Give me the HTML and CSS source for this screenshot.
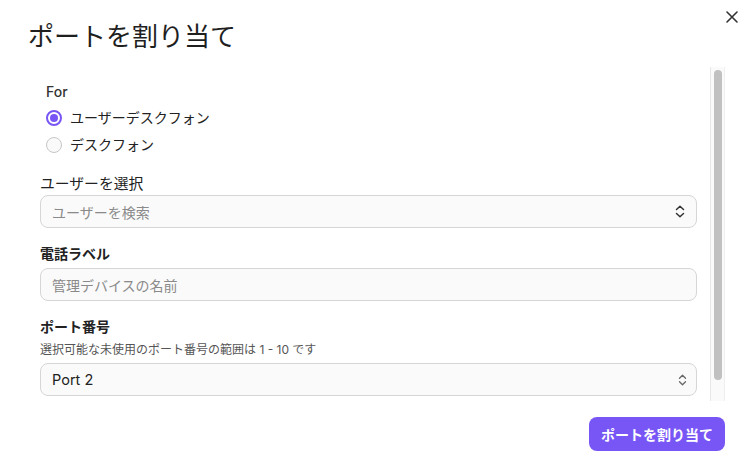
FILE: index.html
```html
<!DOCTYPE html>
<html lang="ja">
<head>
<meta charset="utf-8">
<title>ポートを割り当て</title>
<link rel="stylesheet" href="styles.css">
</head>
<body>
<div class="modal">
  <button class="close" aria-label="閉じる">
    <svg width="12" height="12" viewBox="0 0 12 12"><path d="M1 1L11 11M11 1L1 11" stroke="#333" stroke-width="1.6" stroke-linecap="round"/></svg>
  </button>
  <h1 class="title">ポートを割り当て</h1>
  <div class="scroll">
    <div class="content">
      <div class="for-group">
        <div class="for-label">For</div>
        <label class="radio-row"><span class="radio checked"></span>ユーザーデスクフォン</label>
        <label class="radio-row second"><span class="radio"></span>デスクフォン</label>
      </div>

      <div class="field first">
        <div class="label large">ユーザーを選択</div>
        <div class="select">
          <span class="placeholder">ユーザーを検索</span>
          <svg class="chev" width="10" height="13" viewBox="0 0 10 13"><path d="M1.5 4.5L5 1.2L8.5 4.5M1.5 8.5L5 11.8L8.5 8.5" fill="none" stroke="#333" stroke-width="1.5" stroke-linecap="round" stroke-linejoin="round"/></svg>
        </div>
      </div>

      <div class="field">
        <div class="label bold">電話ラベル</div>
        <div class="input"><span class="placeholder">管理デバイスの名前</span></div>
      </div>

      <div class="field">
        <div class="label bold">ポート番号</div>
        <div class="help">選択可能な未使用のポート番号の範囲は 1 - 10 です</div>
        <div class="select native">
          <span class="value">Port 2</span>
          <svg class="chev" width="9" height="12" viewBox="0 0 9 12"><path d="M1.5 4.2L4.5 1.3L7.5 4.2M1.5 7.8L4.5 10.7L7.5 7.8" fill="none" stroke="#666" stroke-width="1.3" stroke-linecap="round" stroke-linejoin="round"/></svg>
        </div>
      </div>
    </div>
    <div class="scrollbar" aria-hidden="true"><div class="thumb"></div></div>
  </div>
  <div class="footer">
    <button class="primary">ポートを割り当て</button>
  </div>
</div>
</body>
</html>
```

FILE: styles.css
```css
* { box-sizing: border-box; }

html, body {
  margin: 0;
  padding: 0;
  background: #ffffff;
}

body {
  font-family: "Inter", "Noto Sans CJK JP", sans-serif;
  color: #222222;
  width: 755px;
  height: 475px;
  overflow: hidden;
}

.modal {
  position: relative;
  padding: 21px 30px 0 28px;
}

.close {
  position: absolute;
  top: 11px;
  left: 726px;
  width: 12px;
  height: 12px;
  padding: 0;
  border: 0;
  background: none;
  display: flex;
}

.title {
  margin: 0;
  font-size: 26px;
  line-height: 32px;
  font-weight: 400;
  color: #1f1f1f;
}

.scroll {
  margin-top: 14px;
  height: 334px;
  display: flex;
}

.content {
  flex: 1;
  min-width: 0;
  overflow: hidden;
  padding: 15px 13px 0 12px;
}

.scrollbar {
  width: 15px;
  flex: none;
  background: #fafafa;
  border-left: 1px solid #e8e8e8;
  border-right: 1px solid #efefef;
  padding: 3px 2px 21px 3px;
}

.thumb {
  height: 100%;
  background: #c1c1c1;
  border-radius: 4px;
}

.for-group {
  padding-left: 6px;
  display: flex;
  flex-direction: column;
}

.for-label {
  font-size: 14px;
  line-height: 20px;
  font-weight: 500;
  color: #333333;
}

.radio-row {
  display: flex;
  align-items: center;
  gap: 8px;
  margin-top: 6px;
  font-size: 14px;
  line-height: 20px;
  color: #222222;
}

.radio-row.second {
  margin-top: 7px;
}

.radio {
  width: 16px;
  height: 16px;
  border-radius: 50%;
  border: 1px solid #c6c6c6;
  background: #fafafa;
  flex: none;
}

.radio.checked {
  border: 2px solid #7856f5;
  background: #ffffff;
  display: flex;
  align-items: center;
  justify-content: center;
}

.radio.checked::after {
  content: "";
  width: 8px;
  height: 8px;
  border-radius: 50%;
  background: #7856f5;
}

.field {
  margin-top: 16px;
  display: flex;
  flex-direction: column;
}

.field.first {
  margin-top: 19px;
}

.label {
  font-size: 14px;
  line-height: 20px;
  color: #222222;
  margin-bottom: 4px;
}

.label.large {
  font-size: 14.8px;
}

.field.first .label {
  margin-bottom: 1px;
}

.label.bold {
  font-weight: 700;
}

.help {
  font-size: 12px;
  line-height: 17px;
  color: #555555;
  margin-top: 0;
  margin-bottom: 5px;
}

.select,
.input {
  height: 33px;
  border: 1px solid #d6d6d6;
  border-radius: 8px;
  background: #fafafa;
  display: flex;
  align-items: center;
  justify-content: space-between;
  padding: 0 11px;
  font-size: 14px;
}

.select.native {
  padding-right: 9px;
}

.placeholder {
  color: #8a8a8a;
}

.value {
  color: #222222;
  font-size: 14.5px;
}

.chev {
  display: block;
}

.footer {
  display: flex;
  justify-content: flex-end;
  margin-top: 16px;
}

.primary {
  height: 34px;
  padding: 0 12px;
  border: 0;
  border-radius: 8px;
  background: #7856f5;
  color: #ffffff;
  font-family: "Inter", "Noto Sans CJK JP", sans-serif;
  font-size: 14px;
  font-weight: 700;
}
```
